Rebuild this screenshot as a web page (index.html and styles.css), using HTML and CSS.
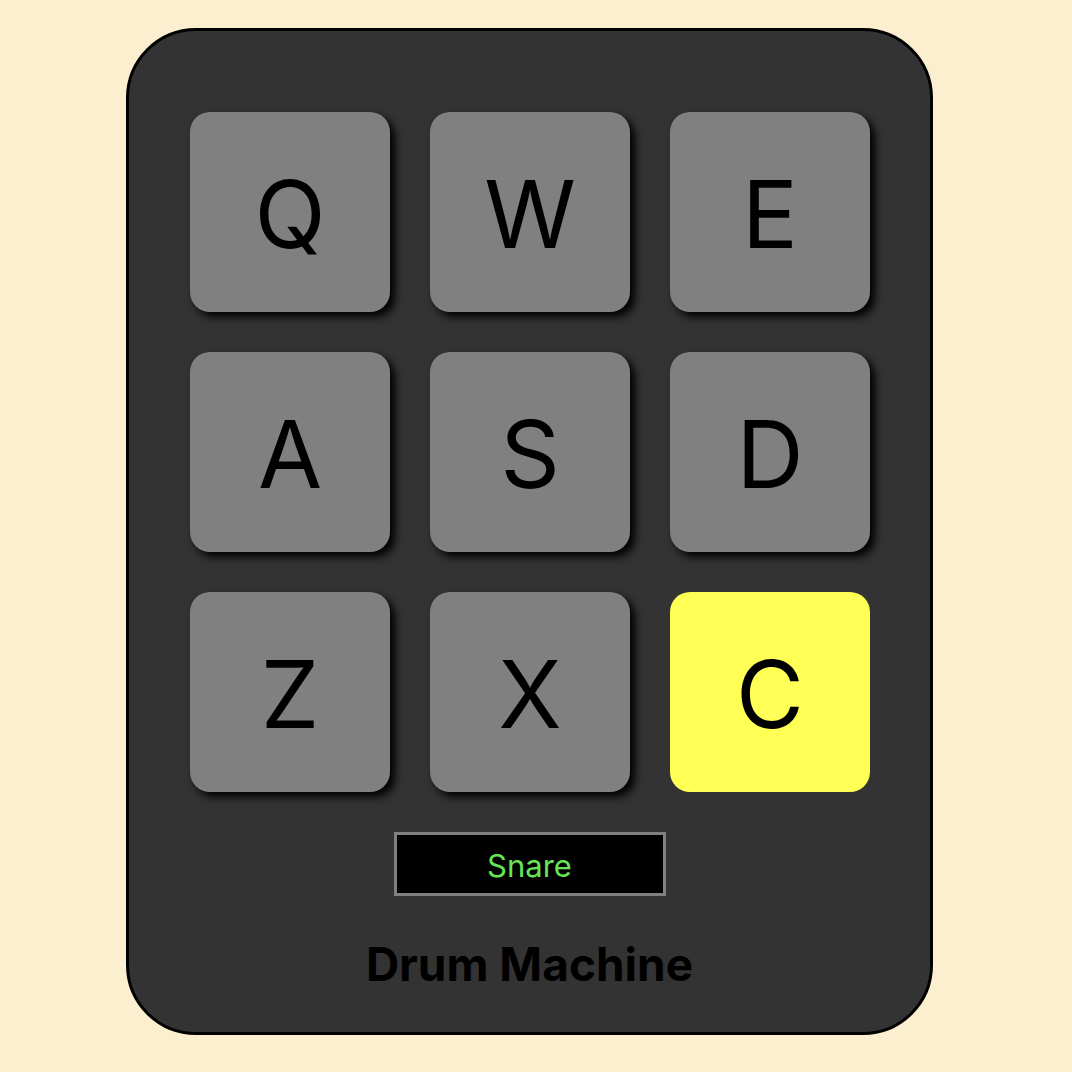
FILE: index.html
```html
<!DOCTYPE html>
<html>
<head>
<meta charset="utf-8">
<link rel="stylesheet" href="styles.css">
</head>
<body>
<div class="page">
  <div class="machine">
    <div class="pads">
      <div class="pad">Q</div>
      <div class="pad">W</div>
      <div class="pad">E</div>
      <div class="pad">A</div>
      <div class="pad">S</div>
      <div class="pad">D</div>
      <div class="pad">Z</div>
      <div class="pad">X</div>
      <div class="pad active">C</div>
    </div>
    <div class="display">Snare</div>
    <div class="title">Drum Machine</div>
  </div>
</div>
</body>
</html>
```

FILE: styles.css
```css
html, body {
  margin: 0;
  padding: 0;
  background: #fcefd0;
}
body {
  font-family: Inter, "Noto Sans", "Liberation Sans", sans-serif;
}
.page {
  width: 1072px;
  height: 1072px;
  box-sizing: border-box;
  padding: 28px 0 0 126px;
}
.machine {
  box-sizing: border-box;
  width: 807px;
  height: 1007px;
  background: #333333;
  border: 3px solid #000;
  border-radius: 70px;
  padding: 81px 0 0 0;
  display: flex;
  flex-direction: column;
  align-items: center;
}
.pads {
  display: grid;
  grid-template-columns: repeat(3, 200px);
  grid-auto-rows: 200px;
  gap: 40px;
  margin-left: 1px;
}
.pad {
  background: #808080;
  border-radius: 20px;
  box-shadow: 5px 5px 8px #000;
  display: flex;
  align-items: center;
  justify-content: center;
  font-size: 93px;
  color: #000;
  line-height: 1;
  padding-top: 4px;
  box-sizing: border-box;
}
.pad.active {
  background: #ffff55;
  box-shadow: none;
}
.display {
  margin-top: 40px;
  box-sizing: border-box;
  width: 272px;
  height: 64px;
  background: #000;
  border: 3px solid #808080;
  color: #66e655;
  font-size: 31px;
  padding-top: 2px;
  display: flex;
  align-items: center;
  justify-content: center;
}
.title {
  margin-top: 45px;
  font-size: 46px;
  font-weight: 700;
  color: #000;
  line-height: 1;
}
```
